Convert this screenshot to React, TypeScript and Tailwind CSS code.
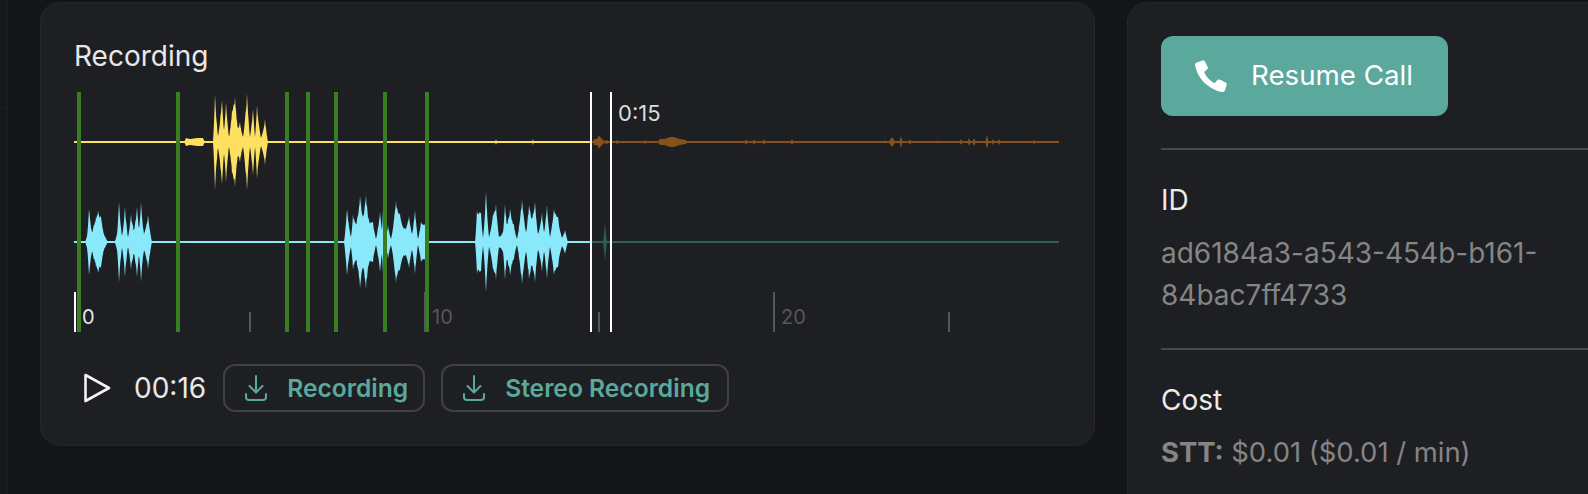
import React from 'react';

type Peak = [number, number];

const FONT = 'font-["Inter","Liberation_Sans",sans-serif]';

// peaks are [x, amplitude] in page pixels, waveform box starts at x=74
const yellowPlayed: Peak[] = [
  [184, 0], [186, 4], [190, 3], [197, 4], [203, 4], [205, 0], [213, 1], [215, 48], [218, 6], [222, 42], [224, 12], [226, 40],
  [229, 5], [232, 32], [235, 45], [238, 14], [240, 20], [243, 5], [247, 48], [250, 5], [253, 33], [255, 5], [257, 37],
  [261, 4], [265, 23], [268, 0], [495, 0], [496, 3], [497, 0], [532, 0], [533, 3], [534, 0],
];
const brownRest: Peak[] = [
  [593, 0], [594, 3], [597, 3], [599, 7], [602, 3], [604, 1], [607, 2], [609, 0], [616, 0], [617, 3], [619, 0], [622, 0], [644, 0], [645, 3], [646, 0],
  [657, 0], [660, 3], [664, 3], [667, 4], [670, 5], [674, 5], [677, 4], [680, 3], [686, 2], [687, 0],
  [744, 0], [746, 3], [748, 0], [752, 0], [754, 3], [756, 0], [762, 0], [764, 3], [766, 0], [790, 0], [792, 3], [794, 0],
  [884, 0], [885, 2], [886, 0], [888, 0], [892, 5], [896, 0], [899, 0], [901, 6], [903, 0], [908, 0], [910, 3], [912, 0],
  [937, 0], [938, 2], [939, 0], [959, 0], [961, 3], [963, 0], [967, 0], [969, 4], [971, 0], [972, 0], [974, 4], [976, 0],
  [985, 0], [987, 7], [989, 0], [991, 0], [993, 3], [995, 0], [997, 0], [999, 3], [1001, 0], [1032, 0], [1034, 2], [1036, 0],
];
const cyanPlayed: Peak[] = [
  [85, 0], [87, 6], [89, 33], [92, 10], [94, 18], [96, 25], [98, 31], [101, 25], [104, 8], [108, 0], [115, 1], [117, 8], [119, 40],
  [122, 6], [125, 35], [128, 5], [131, 28], [134, 12], [137, 35], [139, 14], [141, 40], [144, 8], [148, 27], [152, 0],
  [344, 0], [347, 33], [351, 5], [353, 28], [356, 18], [360, 46], [363, 25], [366, 47], [369, 22], [373, 20], [376, 3], [380, 30],
  [382, 12], [383, 33], [386, 5], [388, 17], [391, 3], [396, 41], [400, 28], [403, 15], [406, 14], [409, 26], [412, 8], [415, 32],
  [418, 3], [421, 20], [425, 18], [428, 0],
  [475, 0], [477, 32], [481, 30], [483, 4], [486, 50], [489, 5], [493, 28], [496, 38], [499, 5], [503, 10], [505, 38], [507, 18], [510, 33],
  [514, 17], [517, 3], [522, 42], [526, 10], [529, 37], [532, 25], [535, 40], [538, 8], [542, 30], [544, 10], [547, 37], [550, 5],
  [554, 33], [558, 25], [562, 4], [565, 12], [568, 0],
];
const tealRest: Peak[] = [[603, 0], [605, 19], [607, 0]];

const greenBars = [77, 176, 285, 306, 334, 383, 425];
const ticks = [
  { x: 74, tall: true, label: '0', color: '#ffffff' },
  { x: 249, tall: false, color: '#56575b' },
  { x: 424, tall: true, label: '10', color: '#56575b' },
  { x: 598, tall: false, color: '#56575b' },
  { x: 773, tall: true, label: '20', color: '#56575b' },
  { x: 948, tall: false, color: '#56575b' },
];

// sample the peaks pixel by pixel: sharp at the top, wide at the bottom, a bit of noise
function sample(peaks: Peak[]): Peak[] {
  const out: Peak[] = [];
  for (let i = 0; i < peaks.length - 1; i++) {
    const [x0, a0] = peaks[i];
    const [x1, a1] = peaks[i + 1];
    const hi = Math.max(a0, a1);
    const lo = Math.min(a0, a1);
    for (let x = x0; x < x1; x += 0.5) {
      const t = (x - x0) / (x1 - x0);
      const u = a0 > a1 ? 1 - t : t;
      const amp = lo + (hi - lo) * Math.pow(u, 1.2);
      const noise = Math.abs(Math.sin(x * 12.9898) * 43758.5453) % 1;
      out.push([x, amp > 6 && t > 0 ? amp * (0.86 + 0.14 * noise) : amp]);
    }
  }
  out.push(peaks[peaks.length - 1]);
  return out;
}

// mirror a list of peaks round the channel's centre line
function envelope(peaks: Peak[], cy: number) {
  const points = sample(peaks);
  const top = points.map(([x, a]) => `${x - 74},${(cy - a).toFixed(1)}`);
  const bottom = [...points].reverse().map(([x, a]) => `${x - 74},${(cy + a).toFixed(1)}`);
  return `M${top.join('L')}L${bottom.join('L')}Z`;
}

function Waveform() {
  return (
    <div className="relative mt-[20px] h-[240px] w-[986px]">
      <svg width="986" height="240" viewBox="0 0 986 240" className="absolute inset-0">
        <rect x="0" y="49" width="517" height="2" fill="#fde05f" />
        <rect x="517" y="49" width="468" height="2" fill="#85521c" />
        <path d={envelope(yellowPlayed, 50)} fill="#fde05f" />
        <path d={envelope(brownRest, 50)} fill="#85521c" />
        <rect x="0" y="149" width="517" height="2" fill="#8ae8fb" />
        <rect x="517" y="149" width="468" height="2" fill="#2c5d58" />
        <path d={envelope(cyanPlayed, 150)} fill="#8ae8fb" />
        <path d={envelope(tealRest, 150)} fill="#2c5d58" />
        {greenBars.map((x) => (
          <rect key={x} x={x - 74} y="0" width="4" height="240" fill="#3b7e22" />
        ))}
        {ticks.map((t) => (
          <rect key={t.x} x={t.x - 74} y={t.tall ? 200 : 220} width="2" height={t.tall ? 40 : 20} fill={t.color} />
        ))}
        <rect x="516" y="0" width="2" height="240" fill="#ffffff" />
        <rect x="536" y="0" width="2" height="240" fill="#ffffff" />
      </svg>
      {ticks.map((t) =>
        t.label ? (
          <span
            key={t.label}
            className="absolute top-[212px] text-[20px] leading-[26px]"
            style={{ left: t.x - 74 + 8, color: t.label === '0' ? '#e6e6e6' : '#56575b' }}
          >
            {t.label}
          </span>
        ) : null,
      )}
      <span className="absolute left-[544px] top-[8px] text-[22px] leading-[26px] text-[#dcdcdc]">0:15</span>
    </div>
  );
}

function DownloadIcon() {
  return (
    <svg width="22" height="26" viewBox="0 0 22 26" fill="none" stroke="currentColor" strokeWidth="2" strokeLinecap="round" strokeLinejoin="round">
      <path d="M11 1 V17" />
      <path d="M4.5 11 L11 17.5 L17.5 11" />
      <path d="M1 19 V22 C1 24 2 25 4 25 H18 C20 25 21 24 21 22 V19" />
    </svg>
  );
}

function DownloadButton({ label, width }: { label: string; width: string }) {
  return (
    <button className={`flex h-[48px] items-center gap-[20px] rounded-[12px] border-2 border-[#404145] pl-[20px] text-[24.6px] font-semibold text-[#5ba89d] ${width}`}>
      <DownloadIcon />
      <span>{label}</span>
    </button>
  );
}

export default function App() {
  return (
    <div className={`flex h-[494px] w-[1588px] items-start overflow-hidden bg-[#141516] ${FONT}`}>
      <div className="h-[494px] w-[8px] shrink-0 border-r border-[#1c1e20] bg-[#16181a]">
        <div className="h-[108px] border-b border-[#1f2123]" />
      </div>
      <div className="flex items-start gap-[32px] pt-[2px] pl-[32px]">
        <section className="h-[444px] w-[1055px] shrink-0 rounded-[20px] border border-[#26272b] bg-[#1e1f23] pt-[37px] pl-[33px]">
          <h2 className="text-[28px] leading-[32px] text-[#e8e8e8]">Recording</h2>
          <Waveform />
          <div className="mt-[32px] flex items-center">
            <svg width="28" height="30" viewBox="0 0 28 30" className="ml-[9px] mr-[23px]">
              <path d="M2.5 2 L26 15 L2.5 28 Z" fill="none" stroke="#f2f2f2" strokeWidth="2.6" strokeLinejoin="round" />
            </svg>
            <span className="mr-[17px] text-[28px] leading-[32px] text-[#e8e8e8]">00:16</span>
            <div className="flex gap-[16px]">
              <DownloadButton label="Recording" width="w-[202px]" />
              <DownloadButton label="Stereo Recording" width="w-[288px]" />
            </div>
          </div>
        </section>
        <aside className="h-[600px] w-[600px] shrink-0 rounded-[20px] border border-[#26272b] bg-[#1e1f23] pt-[33px] pl-[33px]">
          <button className="flex h-[80px] w-[287px] items-center gap-[24px] rounded-[12px] bg-[#5ba89d] pl-[34px] text-[27.7px] text-white">
            <svg width="32" height="32" viewBox="0 0 32 32" fill="#ffffff">
              <path d="M7.5 0.5 L1.8 2.4 C0.4 2.9 -0.2 4 0.2 6 C2.5 18 13 29 26 32 C28 32.3 29.4 31.6 30 30.2 L31.6 25 C31.9 24 31.5 23 30.6 22.6 L24.6 19.6 C23.8 19.2 22.8 19.5 22.2 20.2 L19.6 23.2 C14.5 20.5 11.2 16.8 9.2 12 L12 9.6 C12.8 9 13 8 12.7 7.1 L10 1.6 C9.6 0.7 8.5 0.2 7.5 0.5 Z" />
            </svg>
            <span>Resume Call</span>
          </button>
          <hr className="mt-[32px] h-[2px] border-0 bg-[#46474b]" />
          <h3 className="mt-[34px] text-[28px] leading-[32px] text-[#ececec]">ID</h3>
          <p className="mt-[16px] w-[400px] text-[28px] leading-[42px] text-[#858585]">ad6184a3-a543-454b-b161-84bac7ff4733</p>
          <hr className="mt-[32px] h-[2px] border-0 bg-[#46474b]" />
          <h3 className="mt-[34px] text-[28px] leading-[32px] text-[#ececec]">Cost</h3>
          <p className="mt-[15px] text-[27.4px] leading-[42px] text-[#858585]">
            <b className="font-bold">STT:</b> $0.01 ($0.01 / min)
          </p>
        </aside>
      </div>
    </div>
  );
}
